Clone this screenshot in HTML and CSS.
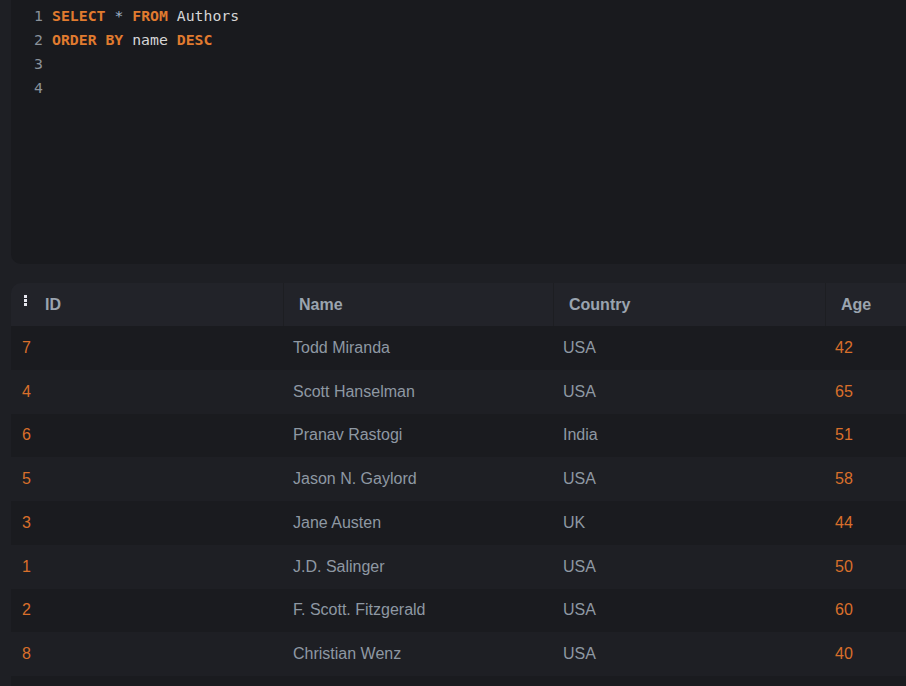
FILE: index.html
```html
<!DOCTYPE html>
<html>
<head>
<meta charset="utf-8">
<link rel="stylesheet" href="styles.css">
</head>
<body>
<div class="page">
  <div class="editor">
    <div class="line"><span class="ln">1</span><span class="code"><span class="kw">SELECT</span> <span class="op">*</span> <span class="kw">FROM</span> <span class="id">Authors</span></span></div>
    <div class="line"><span class="ln">2</span><span class="code"><span class="kw">ORDER BY</span> <span class="id">name</span> <span class="kw">DESC</span></span></div>
    <div class="line"><span class="ln">3</span></div>
    <div class="line"><span class="ln">4</span></div>
  </div>
  <div class="grid">
    <div class="row head">
      <div class="cell first"><span class="grip"><i></i><i></i><i></i></span>ID</div>
      <div class="cell">Name</div>
      <div class="cell">Country</div>
      <div class="cell">Age</div>
    </div>
    <div class="row odd"><div class="cell num">7</div><div class="cell">Todd Miranda</div><div class="cell">USA</div><div class="cell num">42</div></div>
    <div class="row"><div class="cell num">4</div><div class="cell">Scott Hanselman</div><div class="cell">USA</div><div class="cell num">65</div></div>
    <div class="row odd"><div class="cell num">6</div><div class="cell">Pranav Rastogi</div><div class="cell">India</div><div class="cell num">51</div></div>
    <div class="row"><div class="cell num">5</div><div class="cell">Jason N. Gaylord</div><div class="cell">USA</div><div class="cell num">58</div></div>
    <div class="row odd"><div class="cell num">3</div><div class="cell">Jane Austen</div><div class="cell">UK</div><div class="cell num">44</div></div>
    <div class="row"><div class="cell num">1</div><div class="cell">J.D. Salinger</div><div class="cell">USA</div><div class="cell num">50</div></div>
    <div class="row odd"><div class="cell num">2</div><div class="cell">F. Scott. Fitzgerald</div><div class="cell">USA</div><div class="cell num">60</div></div>
    <div class="row"><div class="cell num">8</div><div class="cell">Christian Wenz</div><div class="cell">USA</div><div class="cell num">40</div></div>
    <div class="row odd tail"></div>
  </div>
</div>
</body>
</html>
```
FILE: styles.css
```css
html, body {
  margin: 0;
  padding: 0;
  background: #1e1f24;
  overflow: hidden;
  height: 686px;
}
.page {
  padding-left: 11px;
  display: flex;
  flex-direction: column;
  gap: 19px;
}
.editor {
  background: #191a1e;
  height: 264px;
  border-bottom-left-radius: 10px;
  padding-top: 4px;
  box-sizing: border-box;
  font-family: "DejaVu Sans Mono", monospace;
  font-size: 14.8px;
  color: #d4d4d4;
}
.line {
  height: 24px;
  line-height: 24px;
  display: flex;
}
.ln {
  width: 32px;
  text-align: right;
  padding-right: 9px;
  color: #8a929b;
  flex: none;
}
.code { white-space: pre; }
.kw {
  color: #e07b2f;
  font-weight: bold;
}
.op { color: #9fb3c8; }
.id { color: #d6d6d6; }
.grid {
  font-family: "Liberation Sans", Arial, sans-serif;
  font-size: 16px;
  color: #8e98a3;
  border-top-left-radius: 10px;
  overflow: hidden;
}
.row {
  display: grid;
  grid-template-columns: 272px 270px 272px 1fr;
  height: 43.75px;
  align-items: center;
}
.row.odd { background: #1a1b1f; }
.row.head {
  background: #222329;
  height: 43px;
  font-weight: bold;
  color: #9aa4af;
  align-items: stretch;
}
.head .cell {
  display: flex;
  align-items: center;
  padding-left: 15px;
  border-left: 1px solid #1d1e22;
}
.head .cell.first {
  border-left: none;
  padding-left: 13px;
}
.cell {
  padding-left: 10px;
  white-space: nowrap;
  overflow: hidden;
}
.row:not(.head) .cell:first-child { padding-left: 11px; }
.num { color: #d96f2b; }
.grip {
  display: flex;
  flex-direction: column;
  gap: 1px;
  width: 3px;
  margin-right: 18px;
  margin-top: -9px;
}
.grip i {
  display: block;
  width: 3px;
  height: 3px;
  background: #e6e6ee;
}
.tail { height: 20px; }
```
